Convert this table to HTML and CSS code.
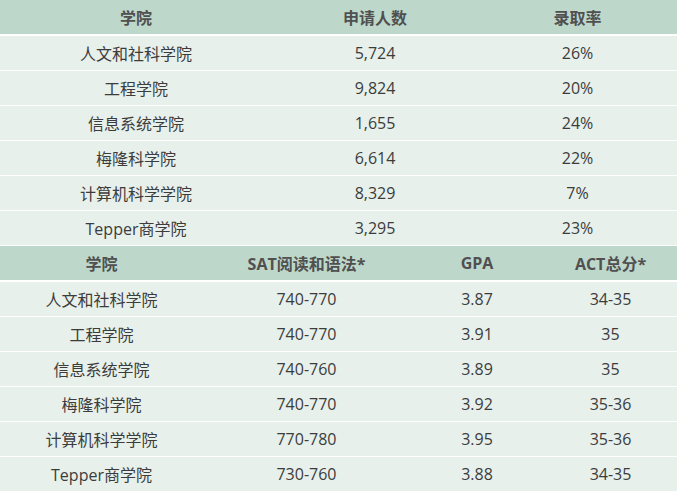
FILE: index.html
```html
<!DOCTYPE html>
<html lang="zh-CN">
<head>
<meta charset="utf-8">
<title>学院录取数据</title>
<link rel="stylesheet" href="styles.css">
</head>
<body>
<div class="sheet">
  <div class="tbl t1">
    <div class="row head"><div>学院</div><div>申请人数</div><div>录取率</div></div>
    <div class="row"><div>人文和社科学院</div><div>5,724</div><div>26%</div></div>
    <div class="row"><div>工程学院</div><div>9,824</div><div>20%</div></div>
    <div class="row"><div>信息系统学院</div><div>1,655</div><div>24%</div></div>
    <div class="row"><div>梅隆科学院</div><div>6,614</div><div>22%</div></div>
    <div class="row"><div>计算机科学学院</div><div>8,329</div><div>7%</div></div>
    <div class="row"><div>Tepper商学院</div><div>3,295</div><div>23%</div></div>
  </div>
  <div class="tbl t2">
    <div class="row head"><div>学院</div><div>SAT阅读和语法*</div><div>GPA</div><div>ACT总分*</div></div>
    <div class="row"><div>人文和社科学院</div><div>740-770</div><div>3.87</div><div>34-35</div></div>
    <div class="row"><div>工程学院</div><div>740-770</div><div>3.91</div><div>35</div></div>
    <div class="row"><div>信息系统学院</div><div>740-760</div><div>3.89</div><div>35</div></div>
    <div class="row"><div>梅隆科学院</div><div>740-770</div><div>3.92</div><div>35-36</div></div>
    <div class="row"><div>计算机科学学院</div><div>770-780</div><div>3.95</div><div>35-36</div></div>
    <div class="row"><div>Tepper商学院</div><div>730-760</div><div>3.88</div><div>34-35</div></div>
  </div>
</div>
</body>
</html>
```
FILE: styles.css
```css
html, body {
  margin: 0;
  padding: 0;
  background: #ffffff;
}
body {
  font-family: "Open Sans", "Noto Sans CJK SC", sans-serif;
  font-size: 16px;
  color: #3c3c3c;
}
.sheet {
  width: 677px;
}
.row {
  display: grid;
  height: 34px;
  align-items: center;
  text-align: center;
  background: #e7f0eb;
  border-bottom: 1px solid #ffffff;
  white-space: nowrap;
}
.row.head {
  background: #bdd7cb;
  border-bottom: 2px solid #ffffff;
  font-weight: 700;
  color: #505050;
}
.t1 .row {
  grid-template-columns: 272px 206px 1fr;
}
.t2 .row {
  grid-template-columns: 203px 207px 134px 1fr;
}
```
